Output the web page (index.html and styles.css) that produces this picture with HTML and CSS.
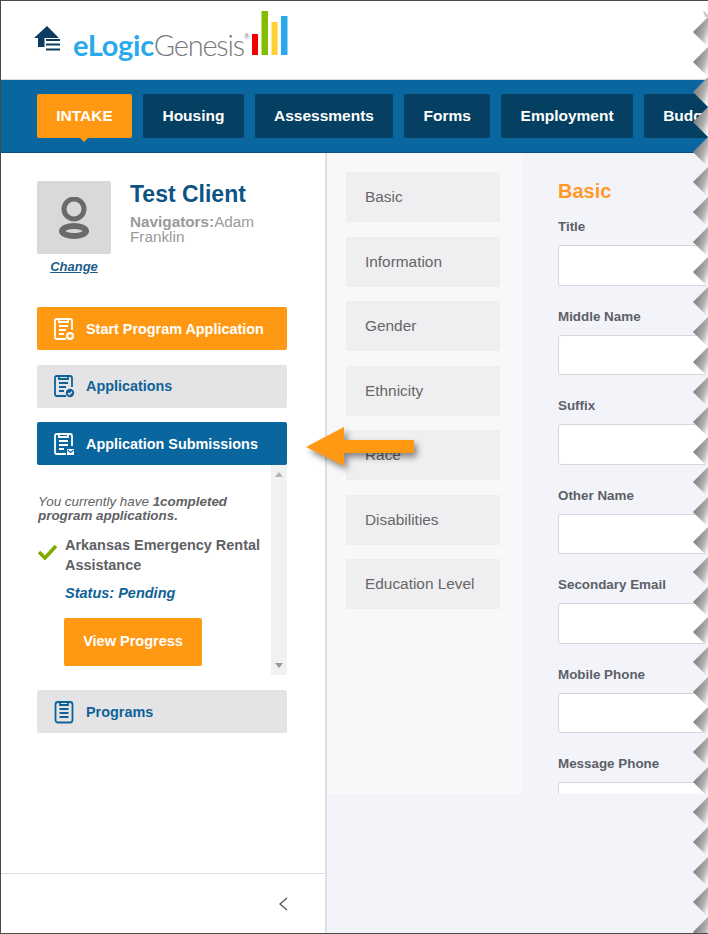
FILE: index.html
```html
<!DOCTYPE html>
<html>
<head>
<link rel="stylesheet" href="styles.css">
</head>

<body>
<div class="page">

    <header class="topbar">
        <svg class="home-icon" width="28" height="28" viewBox="0 0 28 28">
            <path d="M14 1 L1 13 H5 V22 H11.500 V13 H24 L26 13 Z" fill="#0c3c5f"/>
            <path d="M13 15 H27 M13 19.500 H27 M13 24.500 H27" stroke="#0c3c5f" stroke-width="2.200"/>
        </svg>
        <div class="logo">
            <span class="logo-blue">eLogic</span><span class="logo-grey">Genesis</span><span class="logo-mark">®</span>
            <svg class="logo-bars" width="36" height="44" viewBox="0 0 36 44">
                <rect x="0" y="23" width="6" height="21" fill="#f00000"/>
                <rect x="9.500" y="0" width="6.500" height="44" fill="#84bd00"/>
                <rect x="19.500" y="11" width="6" height="33" fill="#ffd133"/>
                <rect x="29" y="5" width="6.500" height="39" fill="#2aa9ea"/>
            </svg>
        </div>
    </header>

    <nav class="tabs">
        <a class="tab tab-active">INTAKE</a>
        <a class="tab">Housing</a>
        <a class="tab">Assessments</a>
        <a class="tab">Forms</a>
        <a class="tab">Employment</a>
        <a class="tab">Budget</a>
    </nav>

    <div class="content">
        <aside class="sidebar">
            <div class="sidebar-main">
                <div class="client">
                    <div class="client-photo">
                        <div class="avatar">
                            <svg width="34" height="42" viewBox="0 0 34 42">
                                <circle cx="17" cy="12" r="10" fill="none" stroke="#6a6a6a" stroke-width="5"/>
                                <ellipse cx="17" cy="34" rx="12" ry="5" fill="none" stroke="#6a6a6a" stroke-width="6"/>
                            </svg>
                        </div>
                        <a class="change-link">Change</a>
                    </div>
                    <div class="client-info">
                        <h1>Test Client</h1>
                        <p><b>Navigators:</b>Adam Franklin</p>
                    </div>
                </div>

                <a class="side-btn side-btn-orange">
                    <svg width="21" height="24" viewBox="0 0 21 24" fill="none" stroke="currentColor" stroke-width="1.800">
                        <path d="M12 22 H3 Q1 22 1 20 V4 Q1 2 3 2 H16 Q18 2 18 4 V13"/>
                        <path d="M5 1 V5 H14 V1 M5 9 H14 M5 13 H12 M5 17 H10"/>
                        <circle cx="16" cy="19" r="4" fill="currentColor" stroke="none"/>
                        <path d="M16 17 V21 M14 19 H18" stroke="#ff9913" stroke-width="1.400"/>
                    </svg>
                    Start Program Application
                </a>
                <a class="side-btn side-btn-grey">
                    <svg width="21" height="24" viewBox="0 0 21 24" fill="none" stroke="currentColor" stroke-width="1.800">
                        <path d="M12 22 H3 Q1 22 1 20 V4 Q1 2 3 2 H16 Q18 2 18 4 V13"/>
                        <path d="M5 1 V5 H14 V1 M5 9 H14 M5 13 H12 M5 17 H10"/>
                        <circle cx="16" cy="19" r="4.200" fill="currentColor" stroke="none"/>
                        <path d="M14 19 L15.500 20.500 L18 17.800" stroke="#e4e4e6" stroke-width="1.300"/>
                    </svg>
                    Applications
                </a>
                <a class="side-btn side-btn-blue">
                    <svg width="21" height="24" viewBox="0 0 21 24" fill="none" stroke="currentColor" stroke-width="1.800">
                        <path d="M12 22 H3 Q1 22 1 20 V4 Q1 2 3 2 H16 Q18 2 18 4 V14"/>
                        <path d="M5 1 V5 H14 V1 M5 9 H14 M5 13 H14 M5 17 H10"/>
                        <path d="M13 17 H20 V23 H13 Z" fill="currentColor" stroke="none"/>
                        <path d="M13.500 18 L16.500 20.500 L19.500 18" stroke="#0a669e" stroke-width="1.200"/>
                    </svg>
                    Application Submissions
                </a>

                <div class="submissions">
                    <div class="submissions-body">
                        <p class="submissions-intro">You currently have <b>1completed program applications.</b></p>
                        <div class="submission">
                            <svg class="check-icon" width="19" height="16" viewBox="0 0 19 16">
                                <path d="M1 8 L7 14 L18 2" fill="none" stroke="#7dab00" stroke-width="3.600"/>
                            </svg>
                            <div>
                                <div class="submission-name">Arkansas Emergency Rental Assistance</div>
                                <div class="submission-status">Status: Pending</div>
                                <a class="progress-btn">View Progress</a>
                            </div>
                        </div>
                    </div>
                    <div class="scrollbar">
                        <span class="scroll-up"></span>
                        <span class="scroll-down"></span>
                    </div>
                </div>

                <a class="side-btn side-btn-grey">
                    <svg width="21" height="24" viewBox="0 0 21 24" fill="none" stroke="currentColor" stroke-width="1.800">
                        <rect x="1.500" y="2" width="17" height="20.500" rx="2.500"/>
                        <path d="M6 1 V5 H14 V1 M5.500 9 H14.500 M5.500 13 H14.500 M5.500 17 H14.500"/>
                    </svg>
                    Programs
                </a>
            </div>
            <div class="sidebar-foot">
                <svg width="10" height="14" viewBox="0 0 10 14">
                    <path d="M9 1 L2 7 L9 13" fill="none" stroke="#555" stroke-width="1.300"/>
                </svg>
            </div>
        </aside>

        <main class="workspace">
            <div class="workspace-inner">
                <ul class="sections">
                    <li>Basic</li>
                    <li>Information</li>
                    <li>Gender</li>
                    <li>Ethnicity</li>
                    <li>Race</li>
                    <li>Disabilities</li>
                    <li>Education Level</li>
                </ul>
                <form class="form">
                    <h2>Basic</h2>
                    <label>Title</label>
                    <div class="field"></div>
                    <label>Middle Name</label>
                    <div class="field"></div>
                    <label>Suffix</label>
                    <div class="field"></div>
                    <label>Other Name</label>
                    <div class="field"></div>
                    <label>Secondary Email</label>
                    <div class="field"></div>
                    <label>Mobile Phone</label>
                    <div class="field"></div>
                    <label>Message Phone</label>
                    <div class="field"></div>
                </form>
            </div>
        </main>
    </div>

    <!-- callout arrow drawn on the screenshot -->
    <svg class="callout" width="124" height="56" viewBox="0 0 124 56">
        <path d="M2 23 L40 3 V16 H110 V29 H40 V42 Z" fill="#ff9913"/>
    </svg>

    <!-- torn right edge -->
    <svg class="torn-edge" width="15" height="934" viewBox="0 0 15 934">
        <defs>
            <linearGradient id="toothFill" x1="0" y1="0.250" x2="1" y2="1">
                <stop offset="0" stop-color="#707070"/>
                <stop offset="0.600" stop-color="#b2b2b2"/>
                <stop offset="0.850" stop-color="#ececec"/>
                <stop offset="1" stop-color="#ffffff"/>
            </linearGradient>
            <pattern id="teeth" x="0" y="17" width="15" height="30" patternUnits="userSpaceOnUse">
                <path d="M15 0 L0 15 L15 30 Z" fill="url(#toothFill)"/>
            </pattern>
        </defs>
        <rect x="0" y="0" width="15" height="17" fill="#fff"/>
        <path d="M10 10 L15 15 V17 H12 Z" fill="#c9c9c9"/>
        <rect x="0" y="17" width="15" height="917" fill="url(#teeth)"/>
    </svg>
</div>
</body>

</html>
```

FILE: styles.css
```css
* {
    box-sizing: border-box;
}

body {
    margin: 0;
    font-family: "Liberation Sans", Arial, sans-serif;
}

a {
    text-decoration: none;
}

.page {
    position: relative;
    width: 708px;
    height: 934px;
    overflow: hidden;
    display: flex;
    flex-direction: column;
    background: #fff;
    border-top: 1px solid #4a4a4a;
    border-left: 1px solid #4a4a4a;
    border-bottom: 1px solid #4a4a4a;
}

/* header */
.topbar {
    height: 79px;
    flex: none;
    display: flex;
    align-items: flex-start;
    padding: 24px 0 0 32px;
    border-bottom: 1px solid #dcdcdc;
}

.home-icon {
    flex: none;
}

.logo {
    position: relative;
    margin-left: 12px;
    padding-top: 3px;
    font-family: Lato, "Open Sans", sans-serif;
    font-size: 29px;
    line-height: 34px;
    white-space: nowrap;
    display: flex;
    align-items: flex-start;
}

.logo-blue {
    color: #2aa9ea;
    font-weight: 700;
    letter-spacing: -0.3px;
}

.logo-grey {
    color: #77797c;
    font-weight: 300;
    letter-spacing: -1.200px;
}

.logo-mark {
    font-size: 7px;
    line-height: 8px;
    color: #888;
    margin: 4px 0 0 0;
}

.logo-bars {
    margin: -17px 0 0 2px;
}

/* tabs */
.tabs {
    height: 73px;
    flex: none;
    display: flex;
    gap: 11px;
    padding: 14px 0 0 36px;
    background: #0a669e;
    border-bottom: 1px solid #07507f;
    overflow: hidden;
}

.tab {
    position: relative;
    flex: none;
    height: 44px;
    padding: 0 19.300px;
    background: #053f62;
    border-radius: 2px;
    color: #fff;
    font-size: 15.500px;
    font-weight: bold;
    line-height: 43px;
}

.tab-active {
    background: #ff9913;
}

.tab-active:after {
    content: "";
    position: absolute;
    left: 43px;
    bottom: -4px;
    border-left: 4px solid transparent;
    border-right: 4px solid transparent;
    border-top: 4px solid #ff9913;
}

/* layout under the tabs */
.content {
    flex: 1;
    min-height: 0;
    display: flex;
}

.sidebar {
    width: 326px;
    flex: none;
    display: flex;
    flex-direction: column;
    border-right: 2px solid #dedfe3;
}

.sidebar-main {
    flex: 1;
    padding: 28px 38px 0 36px;
}

.sidebar-foot {
    height: 60px;
    flex: none;
    display: flex;
    align-items: center;
    justify-content: flex-end;
    padding-right: 37px;
    border-top: 1px solid #dedfe3;
}

/* client block */
.client {
    display: flex;
    gap: 19px;
    height: 126px;
}

.client-photo {
    width: 74px;
    flex: none;
    text-align: center;
}

.avatar {
    width: 74px;
    height: 73px;
    display: flex;
    align-items: center;
    justify-content: center;
    background: #d9d9d9;
    border-radius: 2px;
}

.change-link {
    display: block;
    margin-top: 5px;
    color: #1a5c8a;
    font-size: 13px;
    font-style: italic;
    font-weight: bold;
    text-decoration: underline;
}

.client-info h1 {
    margin: 0;
    color: #0d5383;
    font-size: 23px;
    line-height: 26px;
}

.client-info p {
    margin: 7px 0 0;
    color: #9a9a9a;
    font-size: 15.300px;
    line-height: 15px;
}

/* sidebar buttons */
.side-btn {
    height: 43px;
    display: flex;
    align-items: center;
    gap: 11px;
    margin-bottom: 14.500px;
    padding-left: 17px;
    border-radius: 2px;
    font-size: 14.400px;
    font-weight: bold;
}

.side-btn svg {
    flex: none;
}

.side-btn-orange {
    background: #ff9913;
    color: #fff;
}

.side-btn-grey {
    background: #e4e4e6;
    color: #0f6298;
}

.side-btn-blue {
    background: #0a669e;
    color: #fff;
    margin-bottom: 0;
}

/* scrolling list of submissions */
.submissions {
    height: 210px;
    display: flex;
    margin-bottom: 15px;
}

.submissions-body {
    flex: 1;
    padding: 30px 6px 0 1px;
    color: #5f6166;
}

.submissions-intro {
    margin: 0;
    font-size: 13.400px;
    font-style: italic;
    line-height: 14px;
}

.submission {
    display: flex;
    gap: 8px;
    margin-top: 12px;
}

.check-icon {
    flex: none;
    margin-top: 9px;
}

.submission-name {
    font-size: 14.450px;
    font-weight: bold;
    line-height: 20px;
}

.submission-status {
    margin-top: 8px;
    color: #0f6298;
    font-size: 14.500px;
    font-style: italic;
    font-weight: bold;
    line-height: 20px;
}

.progress-btn {
    display: block;
    width: 138px;
    height: 48px;
    margin: 15px 0 0 -1px;
    background: #ff9913;
    border-radius: 2px;
    color: #fff;
    font-size: 14.500px;
    font-weight: bold;
    line-height: 47px;
    text-align: center;
}

.scrollbar {
    width: 16px;
    flex: none;
    display: flex;
    flex-direction: column;
    justify-content: space-between;
    align-items: center;
    padding: 7px 0;
    background: #f1f1f1;
}

.scroll-up {
    border-left: 4px solid transparent;
    border-right: 4px solid transparent;
    border-bottom: 5px solid #b5b5b5;
}

.scroll-down {
    border-left: 4px solid transparent;
    border-right: 4px solid transparent;
    border-top: 5px solid #9a9a9a;
}

/* right part */
.workspace {
    flex: 1;
    min-width: 0;
    background: #f3f4f9;
}

.workspace-inner {
    height: 641px;
    display: flex;
    overflow: hidden;
}

.sections {
    width: 196px;
    flex: none;
    margin: 0;
    padding: 19px 0 0 19px;
    list-style: none;
    background: #f8f8fb;
}

.sections li {
    width: 154px;
    height: 50px;
    margin-bottom: 14.500px;
    padding-left: 19px;
    background: #efeff1;
    color: #666;
    font-size: 15.400px;
    line-height: 49px;
}

.form {
    flex: 1;
    padding: 26px 0 0 35px;
}

.form h2 {
    margin: 0 0 16px;
    color: #ff9a2a;
    font-size: 20px;
    line-height: 24px;
}

.form label {
    display: block;
    color: #5c6068;
    font-size: 13.400px;
    font-weight: bold;
    line-height: 16px;
}

.field {
    width: 200px;
    height: 40.500px;
    margin: 10px 0 23px;
    background: #fff;
    border: 1px solid #d5d7dc;
    border-radius: 3px;
}

/* things lying over the page */
.callout {
    position: absolute;
    left: 303px;
    top: 423px;
    filter: drop-shadow(3px 4px 3px rgba(0, 0, 0, 0.45));
}

.torn-edge {
    position: absolute;
    right: 0;
    top: -1px;
}
```
